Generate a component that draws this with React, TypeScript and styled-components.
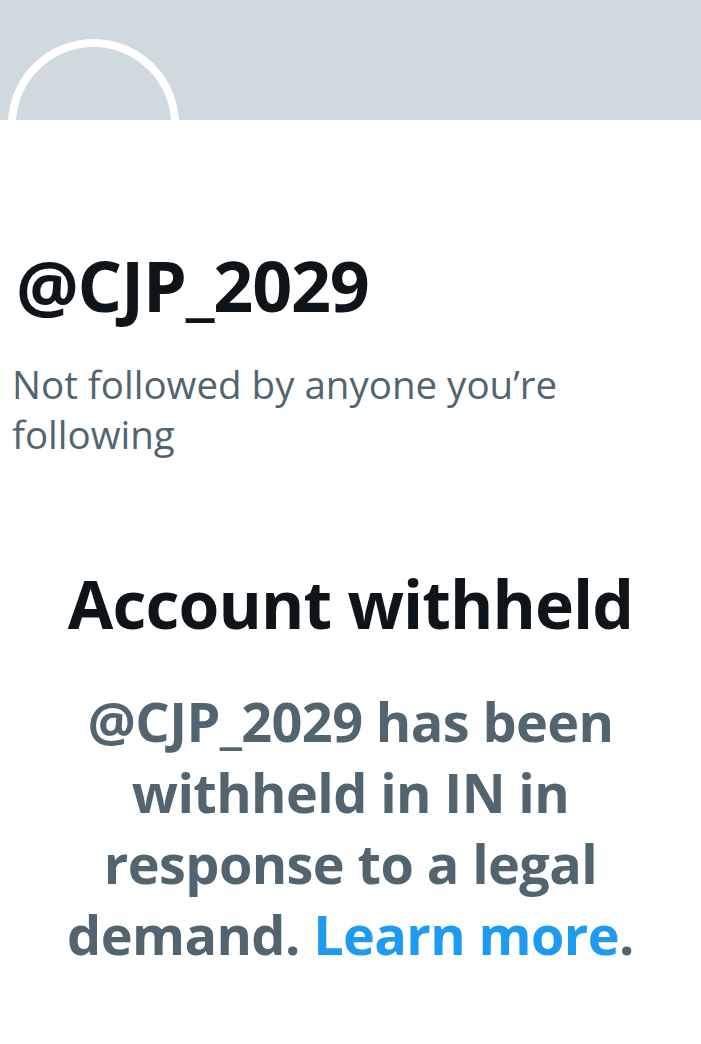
import React from "react";
import styled, { createGlobalStyle } from "styled-components";

const Global = createGlobalStyle`
  html, body { margin: 0; padding: 0; background: #ffffff; }
  body { font-family: "Open Sans", "Liberation Sans", sans-serif; }
`;

const Page = styled.div`
  width: 701px;
  height: 1044px;
  background: #ffffff;
  overflow: hidden;
`;

const Banner = styled.div`
  height: 120px;
  background: #cfd9de;
  position: relative;
  overflow: hidden;
`;

const Avatar = styled.div`
  position: absolute;
  left: 8px;
  top: 39px;
  width: 155px;
  height: 155px;
  border: 8px solid #ffffff;
  border-radius: 50%;
  background: #cfd9de;
`;

const Profile = styled.div`
  padding: 125px 0 0 16px;
`;

const Handle = styled.h1`
  margin: 0;
  font-family: "Open Sans", sans-serif;
  font-weight: 700;
  font-size: 70px;
  line-height: 80px;
  letter-spacing: -1.2px;
  color: #0f1419;
`;

const FollowNote = styled.p`
  margin: 34px 0 0 -4px;
  width: 600px;
  font-family: "Open Sans", sans-serif;
  font-weight: 400;
  font-size: 38.5px;
  line-height: 50px;
  color: #536471;
`;

const Notice = styled.section`
  display: flex;
  flex-direction: column;
  align-items: center;
  text-align: center;
  padding-top: 104px;
`;

const Title = styled.h2`
  margin: 0;
  font-family: "Open Sans", sans-serif;
  font-weight: 700;
  font-size: 66px;
  line-height: 80px;
  letter-spacing: -0.9px;
  color: #0f1419;
`;

const Body = styled.p`
  margin: 43px 0 0;
  width: 600px;
  font-family: "Open Sans", sans-serif;
  font-weight: 700;
  font-size: 54px;
  line-height: 71px;
  letter-spacing: -0.6px;
  color: #536471;
`;

const Link = styled.a`
  color: #1d9bf0;
  text-decoration: none;
`;

export default function App() {
  return (
    <Page>
      <Global />
      <Banner>
        <Avatar />
      </Banner>
      <Profile>
        <Handle>@CJP_2029</Handle>
        <FollowNote>Not followed by anyone you’re following</FollowNote>
      </Profile>
      <Notice>
        <Title>Account withheld</Title>
        <Body>
          @CJP_2029 has been withheld in IN in response to a legal demand.{" "}
          <Link href="#">Learn more</Link>.
        </Body>
      </Notice>
    </Page>
  );
}
